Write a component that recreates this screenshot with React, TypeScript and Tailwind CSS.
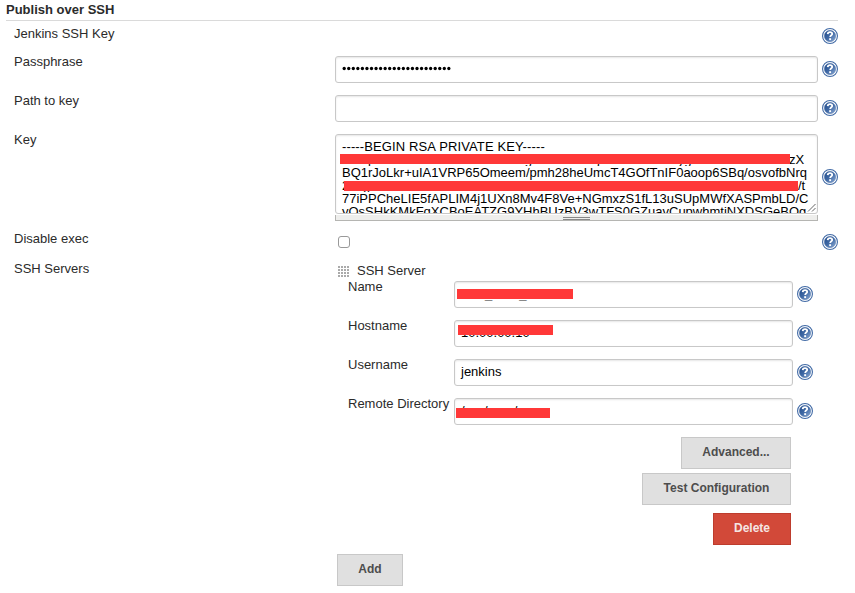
import type { ReactNode } from 'react';

function Help({ className = '' }: { className?: string }) {
  return (
    <svg className={`block h-4 w-4 shrink-0 ${className}`} viewBox="0 0 16 16" aria-label="Help">
      <defs>
        <linearGradient id="disc" x1="0" y1="0" x2="1" y2="1">
          <stop offset="0" stopColor="#1f4a8a" />
          <stop offset="0.5" stopColor="#4069a5" />
          <stop offset="1" stopColor="#8fadd6" />
        </linearGradient>
      </defs>
      <circle cx="8" cy="8" r="7.45" fill="#fff" stroke="#426ba6" strokeWidth="1.1" />
      <circle cx="8" cy="8" r="5.7" fill="url(#disc)" stroke="#3f67a1" strokeWidth="0.4" />
      <path d="M5.7 6.1C5.8 4.7 6.7 4.1 8 4.1c1.3 0 2.2.7 2.2 1.8 0 1.5-2 1.4-2 3.2" fill="none" stroke="#fff" strokeWidth="1.8" />
      <rect x="7.2" y="10.2" width="1.9" height="1.9" fill="#fff" />
    </svg>
  );
}

function Row({ label, className, children }: { label: string; className: string; children?: ReactNode }) {
  return (
    <div className={`flex items-start ${className}`}>
      <div className="w-[321px] shrink-0 leading-[18px]">{label}</div>
      {children}
    </div>
  );
}

function Field({ className, children }: { className: string; children?: ReactNode }) {
  return (
    <div className={`relative mt-[3px] h-[27px] shrink-0 overflow-hidden rounded-[3px] border border-[#c8c8c8] bg-white pl-1.5 leading-[23px] text-black shadow-[inset_0_1px_2px_rgba(0,0,0,0.1)] ${className}`}>
      {children}
    </div>
  );
}

function Mask({ className }: { className: string }) {
  return <span className={`absolute bg-[#ff3838] ${className}`} />;
}

function ServerRow({ label, children }: { label: string; children?: ReactNode }) {
  return (
    <div className="flex h-[39px] items-start">
      <div className="w-[106px] shrink-0 whitespace-nowrap leading-[18px]">{label}</div>
      <Field className="w-[339px]">{children}</Field>
      <Help className="ml-1 mt-2" />
    </div>
  );
}

function Button({ className, children }: { className: string; children: ReactNode }) {
  return <button className={`block h-8 border pb-0.5 text-center text-[12px] font-bold ${className}`}>{children}</button>;
}

const grey = 'border-[#c8c8c8] bg-[#e0e0e0] text-[#4d4d4d]';

export default function App() {
  return (
    <main className="h-[593px] w-[855px] overflow-hidden bg-white font-['Liberation_Sans',Arial,sans-serif] text-[13px] text-[#2b2b2b]">
      <h2 className="ml-1.5 h-[21px] w-[832px] border-b border-[#dadada] font-bold leading-[19px]">Publish over SSH</h2>
      <div className="pl-3.5 pt-1">
        <Row label="Jenkins SSH Key" className="h-7">
          <Help className="ml-[487px] mt-[3px]" />
        </Row>
        <Row label="Passphrase" className="h-[39px]">
          <Field className="w-[483px]">
            <svg className="absolute left-1.5 top-[9px] h-[5px] w-[112px]" viewBox="0 0 112 5" aria-label="Password">
              {Array.from({ length: 24 }, (_, i) => (
                <circle key={i} cx={2.2 + i * 4.55} cy="2.5" r="1.65" fill="#000" />
              ))}
            </svg>
          </Field>
          <Help className="ml-1 mt-2" />
        </Row>
        <Row label="Path to key" className="h-[39px]">
          <Field className="w-[483px]" />
          <Help className="ml-1 mt-2" />
        </Row>
        <Row label="Key" className="h-[99px]">
          <div className="w-[483px] shrink-0 pt-[3px]">
            <div className="relative h-20 overflow-hidden whitespace-nowrap rounded-[3px] border border-[#c8c8c8] pl-1.5 pt-[5px] leading-[13px] text-black shadow-[inset_0_1px_2px_rgba(0,0,0,0.1)]">
              <div className="tracking-[0.12px]">-----BEGIN RSA PRIVATE KEY-----</div>
              <div className="flex">
                <span className="w-[448px] overflow-hidden">xxxxpxxxxxxxxxxxxxxxxxxxxxxxgxxxxxxxxxxjxxxxxxxxxxxxygxxxxxxxxx</span>
                <span className="-ml-px">zX</span>
              </div>
              <div>BQ1rJoLkr+uIA1VRP65Omeem/pmh28heUmcT4GOfTnIF0aoop6SBq/osvofbNrq</div>
              <div className="flex">
                <span className="w-[456px] overflow-hidden">20xg0xXEx7Rx0X00X7EOXfx70xbx0XXEX0XX0x0O0x7EEXE0Ox0X0XX0Xx</span>
                <span>/t</span>
              </div>
              <div>77iPPCheLIE5fAPLIM4j1UXn8Mv4F8Ve+NGmxzS1fL13uSUpMWfXASPmbLD/C</div>
              <div>yQsSHkKMkFqXCBoEATZG9YHhBUzBV3wTFS0GZuavCupwhmtiNXDSGeBOg</div>
              <Mask className="left-1 top-[19px] h-2.5 w-[450px]" />
              <Mask className="left-2 top-[46px] h-2.5 w-[454px]" />
              <svg className="absolute bottom-0 right-0 h-2.5 w-2.5" viewBox="0 0 10 10" stroke="#555" strokeWidth="0.9">
                <path d="M1 8.5 8.5 1M5 8.5 8.5 5" />
              </svg>
            </div>
            <div className="mt-px flex h-[6px] justify-center border border-t-0 border-[#b5b5b2] bg-[#eeeeec]">
              <div className="mt-[2px] h-[3px] w-[27px] border-y border-[#888]" />
            </div>
          </div>
          <Help className="ml-1 mt-[38px]" />
        </Row>
        <Row label="Disable exec" className="h-[30px]">
          <div className="ml-[3px] mt-1.5 h-3 w-3 rounded-[3px] border border-[#999] bg-white" />
          <Help className="ml-[472px] mt-1" />
        </Row>
        <Row label="SSH Servers" className="h-[326px]">
          <div className="w-[479px] pt-0.5">
            <div className="flex h-4 items-start leading-[18px]">
              <svg className="ml-[3px] mt-[4px] h-3 w-3" viewBox="0 0 12 12" fill="#aaa" shapeRendering="crispEdges">
                {Array.from({ length: 16 }, (_, i) => (
                  <rect key={i} x={(i % 4) * 3} y={Math.floor(i / 4) * 3} width="2" height="2" />
                ))}
              </svg>
              <span className="ml-[7px]">SSH Server</span>
            </div>
            <div className="ml-[13px]">
              <ServerRow label="Name">
                <span className="ml-[24px] text-[#777]">_</span><span className="ml-[27px] text-[#777]">_</span>
                <Mask className="left-0.5 top-[7px] h-2.5 w-[116px]" />
              </ServerRow>
              <ServerRow label="Hostname">
                <span>10.00.00.10</span>
                <Mask className="left-[3px] top-1 h-2.5 w-[95px]" />
              </ServerRow>
              <ServerRow label="Username">jenkins</ServerRow>
              <ServerRow label="Remote Directory">
                <span>/xxx/xxxx/xxxx</span>
                <Mask className="left-px top-[9px] h-2.5 w-[94px]" />
              </ServerRow>
            </div>
            <div className="flex w-[456px] flex-col items-end pt-[3px]">
              <Button className={`w-[110px] ${grey}`}>Advanced...</Button>
              <Button className={`mt-1 w-[149px] ${grey}`}>Test Configuration</Button>
              <Button className="mt-2 w-[78px] border-[#bd3c2d] bg-[#d24939] text-[#f5e5e3]">Delete</Button>
            </div>
            <Button className={`ml-0.5 mt-[9px] w-[66px] ${grey}`}>Add</Button>
          </div>
        </Row>
      </div>
    </main>
  );
}
